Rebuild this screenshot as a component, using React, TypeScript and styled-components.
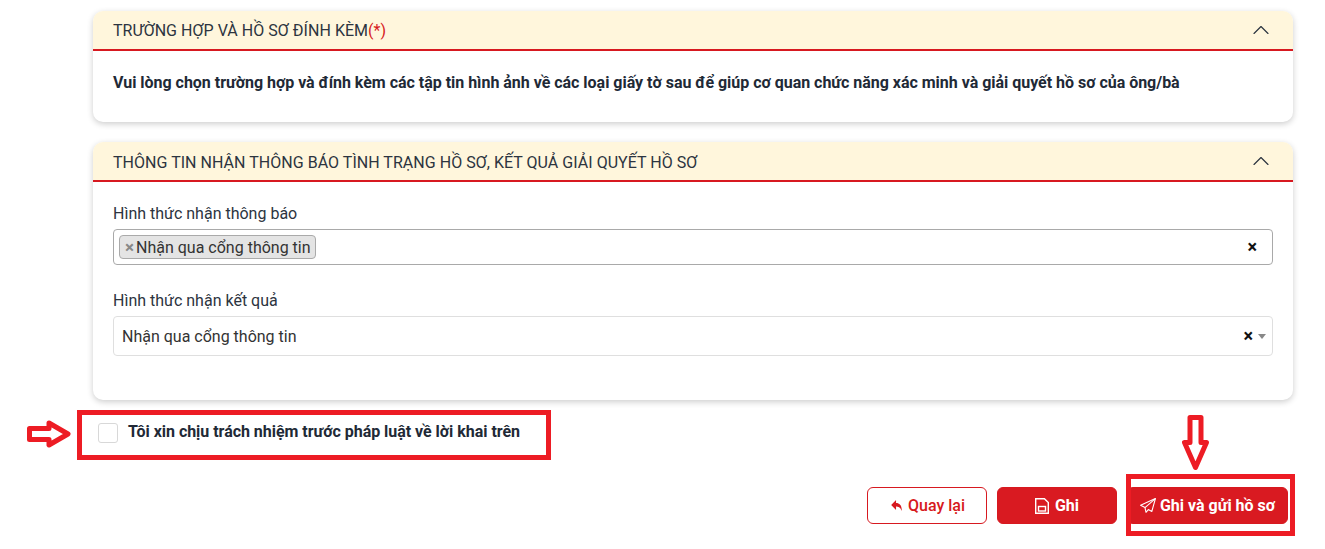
import React from 'react';
import styled, { createGlobalStyle } from 'styled-components';
import { ChevronUp } from 'lucide-react';

const GlobalStyle = createGlobalStyle`
  html, body {
    margin: 0;
    padding: 0;
    background: #fff;
    overflow: hidden;
  }
  * { box-sizing: border-box; }
  body {
    font-family: Roboto, "Liberation Sans", sans-serif;
    color: #212529;
  }
`;

const Page = styled.div`
  position: relative;
  width: 1325px;
  height: 549px;
  padding: 11px 32px 0 93px;
`;

const Card = styled.section<{ $height: number }>`
  height: ${p => p.$height}px;
  margin-bottom: 20px;
  background: #fff;
  border-radius: 10px;
  box-shadow: 0 2px 6px rgba(0, 0, 0, 0.2);
  overflow: hidden;
`;

const CardHeader = styled.header`
  height: 40px;
  padding: 0 18px 0 20px;
  display: flex;
  align-items: center;
  justify-content: space-between;
  background: #fff6dc;
  border-bottom: 2px solid #d71920;
  font-size: 16px;
  letter-spacing: 0.035px;
  color: #2c3440;
`;

const HeaderTitle = styled.span<{ $low?: boolean }>`
  padding-top: ${p => (p.$low ? 2 : 0)}px;
`;

const Required = styled.span`
  color: #d71920;
`;

const Notice = styled.p`
  margin: 0;
  padding: 22px 20px 0;
  font-size: 16px;
  line-height: 20px;
  font-weight: 700;
  letter-spacing: -0.02px;
  color: #212936;
`;

const FormBody = styled.div`
  padding: 22px 20px 0;
`;

const Field = styled.div`
  margin-bottom: 26px;
`;

const Label = styled.label`
  display: block;
  font-size: 16px;
  line-height: 20px;
  margin-bottom: 5px;
  color: #2c3440;
`;

const SelectBox = styled.div<{ $multi?: boolean }>`
  height: ${p => (p.$multi ? 36 : 40)}px;
  display: flex;
  align-items: center;
  padding: ${p => (p.$multi ? '0 15px 0 5px' : '0 6px 0 8px')};
  border: 1px solid ${p => (p.$multi ? '#a9a9a9' : '#dfdfdf')};
  border-radius: 4px;
  font-size: 16px;
  color: #333;
`;

const Tag = styled.span`
  height: 24px;
  display: inline-flex;
  align-items: center;
  padding: 1px 4px 0 5px;
  background: #e4e4e4;
  border: 1px solid #aaa;
  border-radius: 4px;
  line-height: 1;
`;

const TagRemove = styled.span`
  color: #888;
  font-size: 17px;
  font-weight: 700;
  margin-right: 2px;
`;

const SelectValue = styled.span`
  flex: 1;
`;

const Spacer = styled.span`
  flex: 1;
`;

const Clear = styled.span`
  font-size: 18px;
  font-weight: 700;
  color: #111;
  line-height: 1;
`;

const Caret = styled.span`
  width: 0;
  height: 0;
  margin-left: 5px;
  border-left: 4px solid transparent;
  border-right: 4px solid transparent;
  border-top: 5px solid #888;
`;

const AgreeRow = styled.div`
  height: 20px;
  margin: 23px 0 0 5px;
  display: flex;
  align-items: center;
  gap: 10px;
`;

const Checkbox = styled.span`
  width: 20px;
  height: 20px;
  border: 1px solid #d8d8d8;
  border-radius: 3px;
  background: #fff;
`;

const AgreeText = styled.span`
  font-size: 16px;
  font-weight: 700;
  letter-spacing: -0.03px;
  color: #212936;
  position: relative;
  top: -2px;
`;

const Actions = styled.div`
  margin-top: 44px;
  padding-right: 5px;
  display: flex;
  justify-content: flex-end;
  gap: 10px;
`;

const Button = styled.button<{ $outline?: boolean; $width: number; $gap: number; $inset?: number }>`
  width: ${p => p.$width}px;
  height: 37px;
  display: inline-flex;
  align-items: center;
  justify-content: center;
  gap: ${p => p.$gap}px;
  padding: 0 0 0 ${p => p.$inset || 0}px;
  border: 1px solid #d71920;
  border-radius: 6px;
  background: ${p => (p.$outline ? '#fff' : '#d91a21')};
  color: ${p => (p.$outline ? '#d71920' : '#fff')};
  font-family: inherit;
  font-size: 16px;
  font-weight: ${p => (p.$outline ? 500 : 700)};
`;

// the red marks drawn over the screenshot
const MarkBox = styled.div<{ $x: number; $y: number; $w: number; $h: number }>`
  position: absolute;
  left: ${p => p.$x}px;
  top: ${p => p.$y}px;
  width: ${p => p.$w}px;
  height: ${p => p.$h}px;
  border: 5px solid #ed1c24;
  pointer-events: none;
`;

const MarkArrow = styled.svg<{ $x: number; $y: number }>`
  position: absolute;
  left: ${p => p.$x}px;
  top: ${p => p.$y}px;
  fill: #fff;
  stroke: #ed1c24;
  stroke-width: 5;
  stroke-linejoin: round;
`;

const ReplyIcon = () => (
  <svg width={11} height={11} viewBox="0 0 12 10" fill="currentColor" preserveAspectRatio="none">
    <path d="M0.2 4.5L5.5 0V2.8C9.5 2.8 11.8 5 11.8 10C10.4 7.2 8.4 6 5.5 6V9Z" />
  </svg>
);

const SaveIcon = () => (
  <svg width={14} height={16} viewBox="0 0 14 16" fill="none" stroke="currentColor" strokeWidth={1.4}>
    <path d="M.7 .7H9.4L13.3 4.6V15.3H.7Z" />
    <rect x={3.5} y={8.5} width={7} height={4.5} />
  </svg>
);

const PlaneIcon = () => (
  <svg width={16} height={15} viewBox="0 0 16 15" fill="none" stroke="currentColor" strokeWidth={1.1} strokeLinejoin="round">
    <path d="M15.4 .6L.6 7.2L5 9.6L6 14.3L8.3 11.6L11.8 13.5Z" />
    <path d="M15.4 .6L5 9.6" />
  </svg>
);

const App: React.FC = () => (
  <Page>
    <GlobalStyle />
    <Card $height={111}>
      <CardHeader>
        <HeaderTitle>TRƯỜNG HỢP VÀ HỒ SƠ ĐÍNH KÈM<Required>(*)</Required></HeaderTitle>
        <ChevronUp size={28} strokeWidth={1} />
      </CardHeader>
      <Notice>
        Vui lòng chọn trường hợp và đính kèm các tập tin hình ảnh về các loại giấy tờ sau để giúp cơ quan chức năng xác minh và giải quyết hồ sơ của ông/bà
      </Notice>
    </Card>

    <Card $height={258}>
      <CardHeader>
        <HeaderTitle $low>THÔNG TIN NHẬN THÔNG BÁO TÌNH TRẠNG HỒ SƠ, KẾT QUẢ GIẢI QUYẾT HỒ SƠ</HeaderTitle>
        <ChevronUp size={28} strokeWidth={1} />
      </CardHeader>
      <FormBody>
        <Field>
          <Label>Hình thức nhận thông báo</Label>
          <SelectBox $multi>
            <Tag><TagRemove>×</TagRemove>Nhận qua cổng thông tin</Tag>
            <Spacer />
            <Clear>×</Clear>
          </SelectBox>
        </Field>
        <Field>
          <Label>Hình thức nhận kết quả</Label>
          <SelectBox>
            <SelectValue>Nhận qua cổng thông tin</SelectValue>
            <Clear>×</Clear>
            <Caret />
          </SelectBox>
        </Field>
      </FormBody>
    </Card>

    <AgreeRow>
      <Checkbox />
      <AgreeText>Tôi xin chịu trách nhiệm trước pháp luật về lời khai trên</AgreeText>
    </AgreeRow>

    <Actions>
      <Button $outline $width={120} $gap={6} $inset={2}><ReplyIcon />Quay lại</Button>
      <Button $width={120} $gap={6}><SaveIcon />Ghi</Button>
      <Button $width={161} $gap={4}><PlaneIcon />Ghi và gửi hồ sơ</Button>
    </Actions>

    <MarkBox $x={77} $y={410} $w={474} $h={50} />
    <MarkBox $x={1126} $y={474} $w={169} $h={62} />
    <MarkArrow $x={26} $y={420} width={46} height={29} viewBox="0 0 46 29">
      <path d="M3.5 8.5H23V3L42 14L23 25V19.5H3.5Z" />
    </MarkArrow>
    <MarkArrow $x={1182} $y={414} width={29} height={57} viewBox="0 0 29 57">
      <path d="M8 3.5H19V28.5H24.5L13.5 53.5L2.5 28.5H8Z" />
    </MarkArrow>
  </Page>
);

export default App;
